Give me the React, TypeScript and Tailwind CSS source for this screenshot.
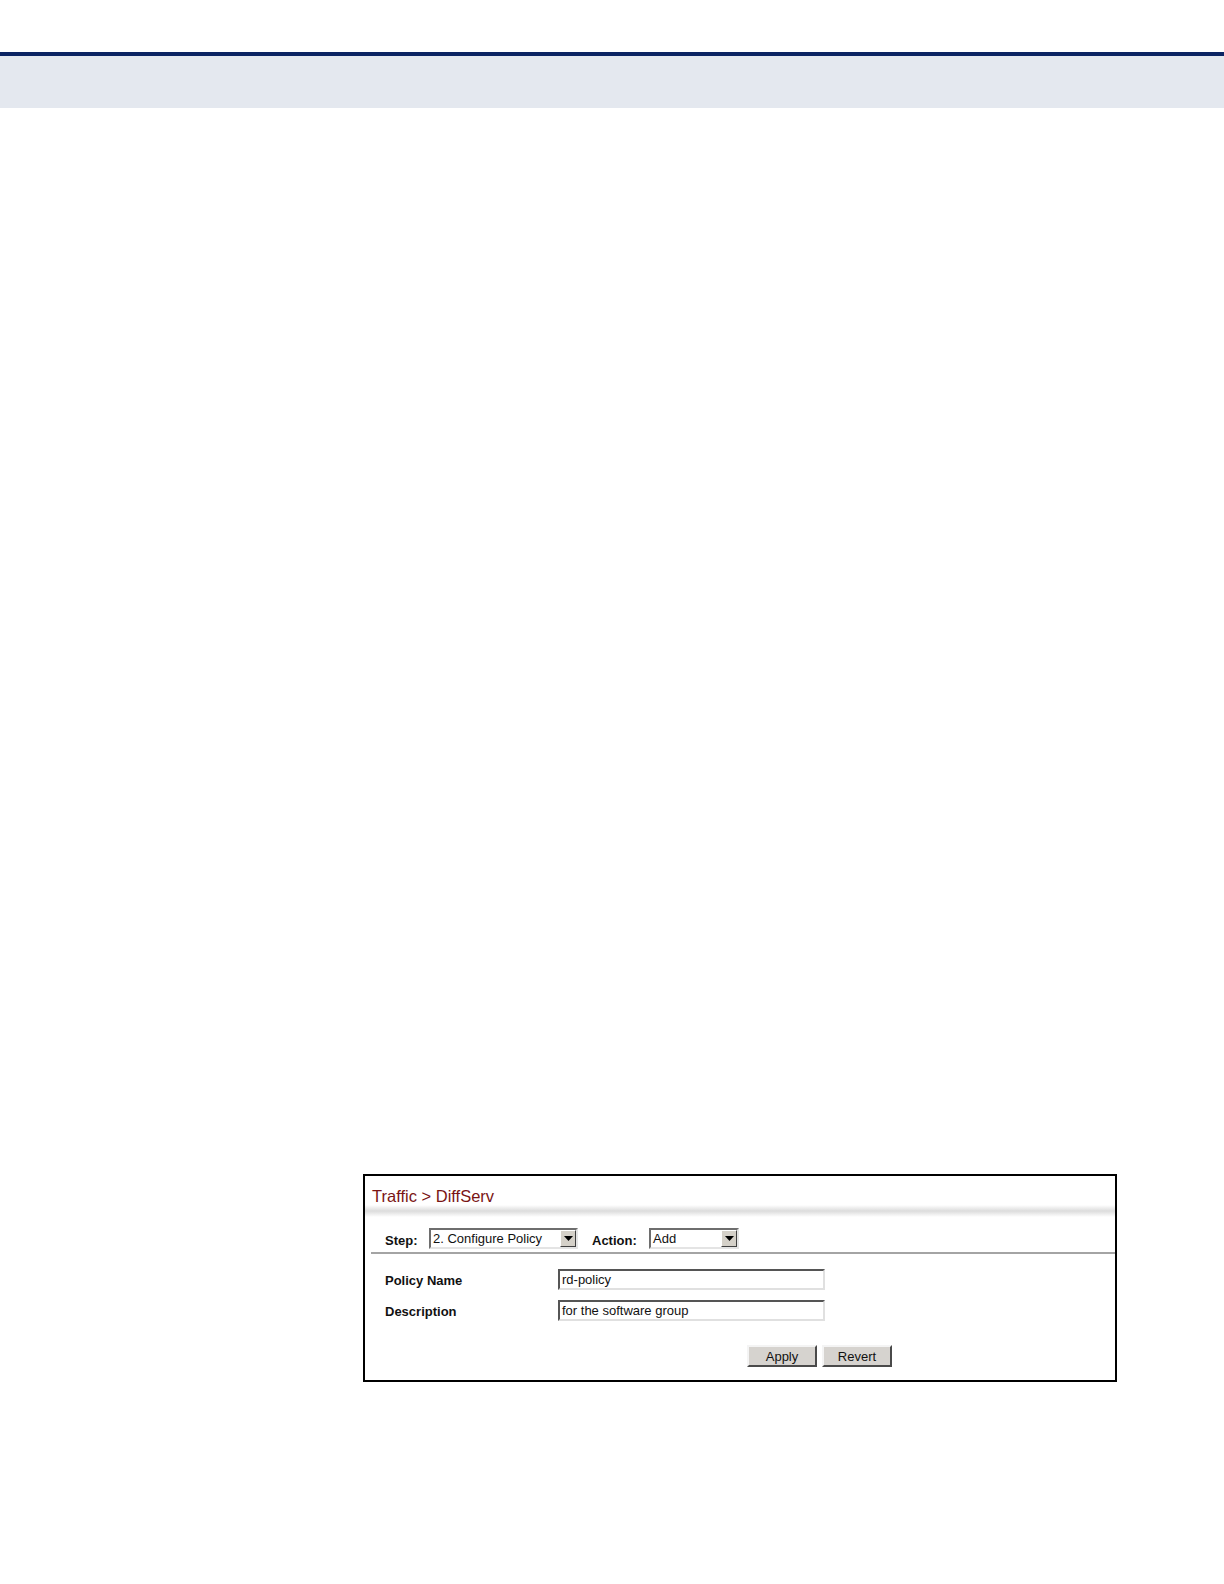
import React from 'react';

const font = { fontFamily: '"Liberation Sans", Arial, sans-serif' };

function DropArrow() {
  return (
    <span className="flex h-[17px] w-[16px] shrink-0 items-center justify-center border border-t-white border-l-white border-r-[#404040] border-b-[#404040] bg-[#d4d0c8]">
      <svg width="9" height="5" viewBox="0 0 9 5">
        <path d="M0 0H9L4.5 5Z" fill="#000" />
      </svg>
    </span>
  );
}

function Select({ value, width }: { value: string; width: string }) {
  return (
    <div
      className={`flex h-[21px] ${width} items-center border-2 border-t-[#6e6e6e] border-l-[#6e6e6e] border-r-[#e4e4e4] border-b-[#e4e4e4] bg-white`}
    >
      <span className="flex-1 pl-[2px] text-[13px] leading-none text-[#111]">{value}</span>
      <DropArrow />
    </div>
  );
}

function TextInput({ value }: { value: string }) {
  return (
    <div className="flex h-[21px] w-[267px] items-center border-2 border-t-[#555] border-l-[#555] border-r-[#e0e0e0] border-b-[#e0e0e0] bg-white">
      <span className="pl-[2px] text-[13px] leading-none text-[#111]">{value}</span>
    </div>
  );
}

function Button({ label }: { label: string }) {
  return (
    <button className="flex h-[22px] w-[70px] items-center justify-center border-2 border-t-[#f4f4f4] border-l-[#f4f4f4] border-r-[#4a4a4a] border-b-[#4a4a4a] bg-[#d6d3cf] text-[13px] leading-none text-[#111]">
      {label}
    </button>
  );
}

export default function App() {
  return (
    <div className="h-[1584px] w-[1224px] overflow-hidden bg-white" style={font}>
      {/* page header band */}
      <div className="mt-[52px] h-[4px] bg-[#0b2463]" />
      <div className="h-[52px] bg-[#e4e8ef]" />

      {/* DiffServ policy screen */}
      <div className="ml-[363px] mt-[1066px] h-[208px] w-[754px] border-2 border-black bg-white">
        <div className="pl-[7px] pt-[11px] text-[16.5px] leading-[18px] text-[#7a1414]">Traffic &gt; DiffServ</div>
        <div className="h-[12px] bg-gradient-to-b from-white via-[#dcdcdc] to-white" />

        <div className="mt-[11px] flex h-[21px] items-center pl-[20px]">
          <span className="w-[44px] pt-[4px] text-[13px] font-bold leading-none text-[#111]">Step:</span>
          <Select value="2. Configure Policy" width="w-[149px]" />
          <span className="ml-[14px] w-[57px] pt-[4px] text-[13px] font-bold leading-none text-[#111]">Action:</span>
          <Select value="Add" width="w-[90px]" />
        </div>
        <div className="ml-[6px] mt-[3px] h-[2px] bg-[#a4a4a4]" />

        <div className="mt-[15px] flex flex-col gap-[10px] pl-[20px]">
          <div className="flex items-center">
            <span className="w-[173px] pt-[2px] text-[13px] font-bold leading-none text-[#111]">Policy Name</span>
            <TextInput value="rd-policy" />
          </div>
          <div className="flex items-center">
            <span className="w-[173px] pt-[2px] text-[13px] font-bold leading-none text-[#111]">Description</span>
            <TextInput value="for the software group" />
          </div>
        </div>

        <div className="mt-[24px] flex gap-[5px] pl-[382px]">
          <Button label="Apply" />
          <Button label="Revert" />
        </div>
      </div>
    </div>
  );
}
